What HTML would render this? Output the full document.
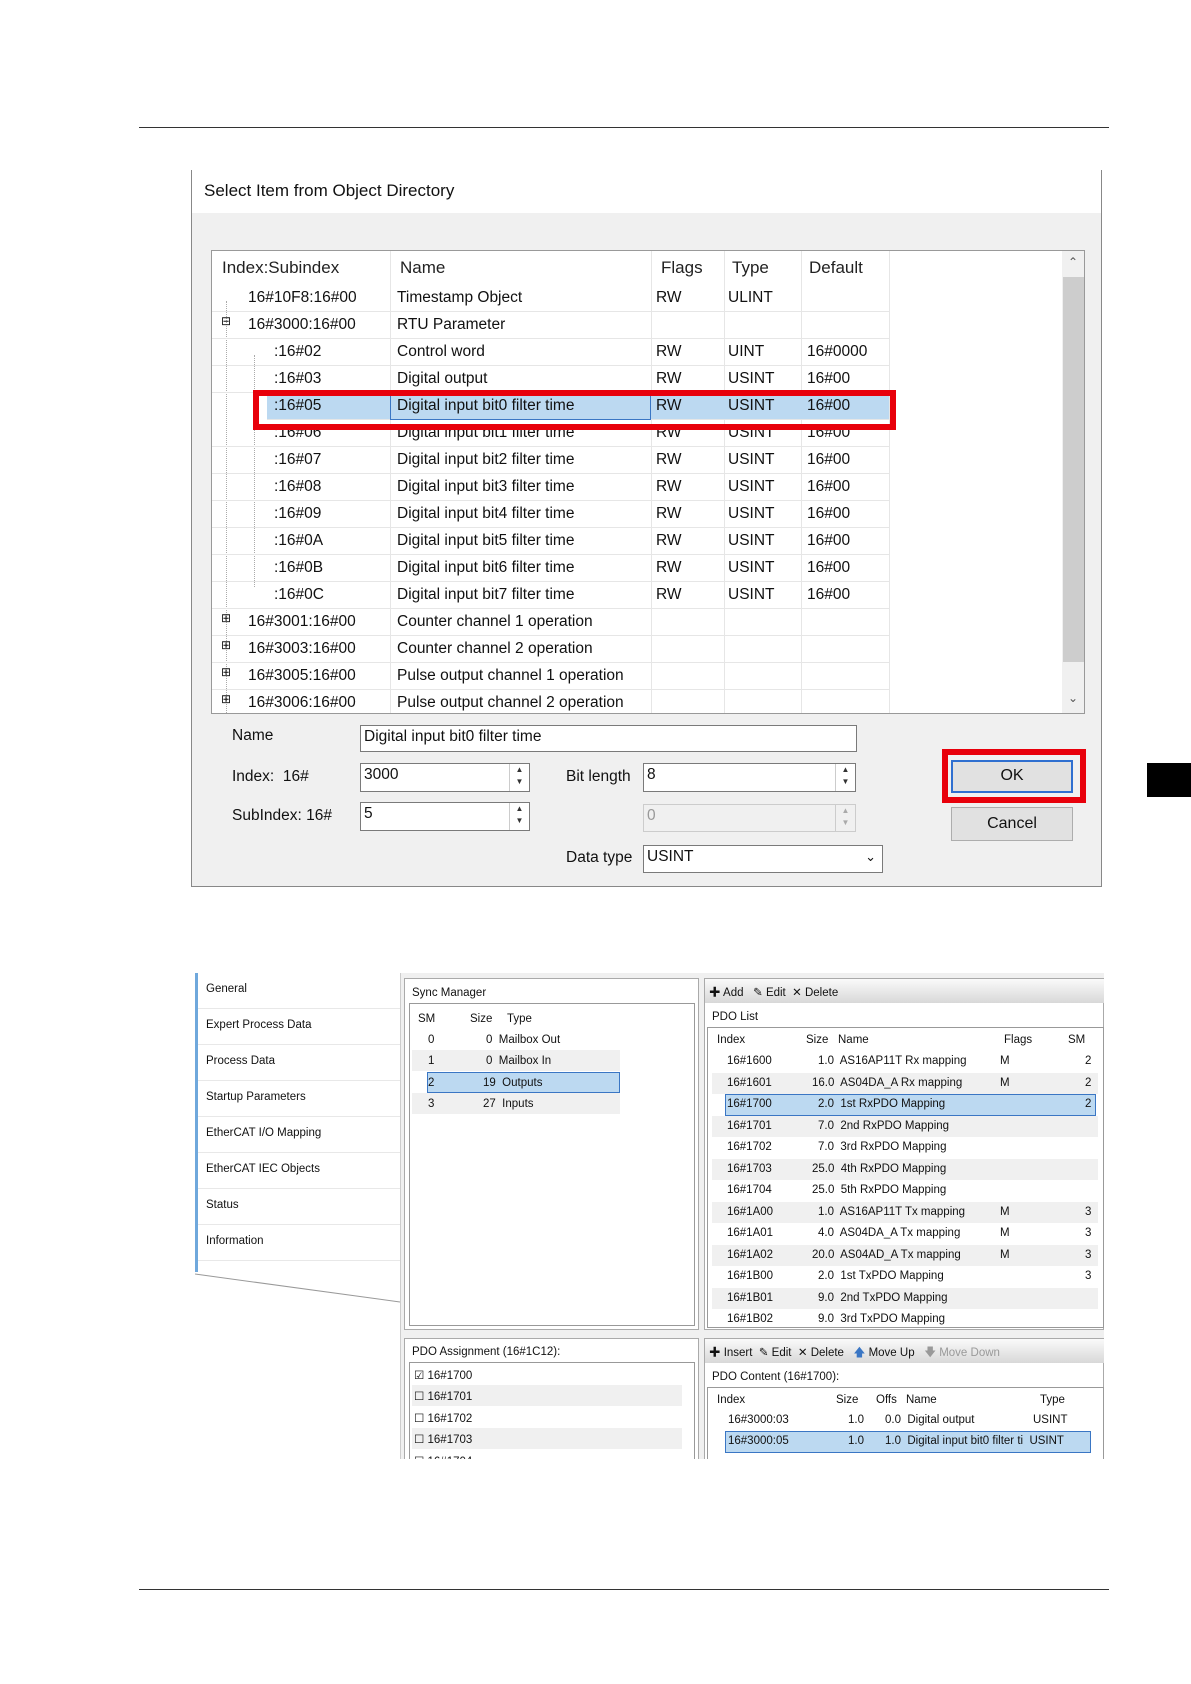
<!DOCTYPE html>
<html><head><meta charset="utf-8"><style>
*{margin:0;padding:0;box-sizing:border-box}
body{width:1191px;height:1684px;background:#fff;position:relative;overflow:hidden;font-family:"Liberation Sans","Noto Sans CJK TC",sans-serif;color:#111}
.a{position:absolute;white-space:nowrap}
.rule{position:absolute;left:139px;width:970px;height:1px;background:#333}
.dlg{position:absolute;left:191px;top:170px;width:911px;height:717px;border:1px solid #888;border-top:none;background:#f0f0f0}
.tb{position:absolute;left:0;top:0;width:100%;height:43px;background:#fff}
.list{position:absolute;left:19px;top:80px;width:874px;height:464px;background:#fff;border:1px solid #999;overflow:hidden;font-size:15.5px}
.row{position:absolute;left:0;width:677px;height:27px;border-bottom:1px solid #e6e6e6}
.c{position:absolute;top:4px}
.vl{position:absolute;top:0;width:1px;background:#e6e6e6;height:464px}
.inp{position:absolute;background:#fff;border:1px solid #7a7a7a;font-size:15.5px;padding:2px 3px}
.spin{position:absolute;right:0;top:0;width:20px;height:100%;border-left:1px solid #ccc;font-size:8px;text-align:center;line-height:12px;color:#333}
.btn{position:absolute;background:#e1e1e1;border:1px solid #adadad;font-size:16px;text-align:center}
.lbl{position:absolute;font-size:15.5px;white-space:nowrap}
.low{position:absolute;left:195px;top:973px;width:909px;height:486px;overflow:hidden}
.tab{position:absolute;left:3px;width:202px;height:36px;font-size:11.5px;padding:10px 0 0 8px;border-bottom:1px solid #e8e8e8}
.pl{position:absolute;font-size:11.5px;white-space:nowrap}
</style></head><body>
<div class="rule" style="top:127px"></div>
<div class="rule" style="top:1589px"></div>
<div class="a" style="left:1147px;top:763px;width:44px;height:34px;background:#000"></div>

<div class="dlg">
 <div class="tb"></div>
 <div class="lbl" style="left:12px;top:11px;font-size:17px">Select Item from Object Directory</div>
 <div class="list">
  <div class="vl" style="left:178px"></div><div class="vl" style="left:439px"></div><div class="vl" style="left:512px"></div><div class="vl" style="left:589px"></div><div class="vl" style="left:677px"></div>
  <div class="a" style="left:0;top:0;width:692px;height:34px;font-size:17px;color:#222">
   <span class="a" style="left:10px;top:7px">Index:Subindex</span><span class="a" style="left:188px;top:7px">Name</span><span class="a" style="left:449px;top:7px">Flags</span><span class="a" style="left:520px;top:7px">Type</span><span class="a" style="left:597px;top:7px">Default</span>
  </div>
  <div class="a" style="left:850px;top:0;width:23px;height:462px;background:#f0f0f0"></div>
  <div class="a" style="left:851px;top:26px;width:21px;height:385px;background:#cdcdcd"></div>
  <div class="a" style="left:856px;top:4px;font-size:12px;color:#555">&#8963;</div>
  <div class="a" style="left:856px;top:440px;font-size:12px;color:#555">&#8964;</div>
  <div class="a" style="left:14px;top:50px;width:1px;height:414px;border-left:1px dotted #aaa"></div>
  <div class="a" style="left:42px;top:104px;width:1px;height:232px;border-left:1px dotted #aaa"></div>
  <div class="row" style="top:34px"><span class="c" style="left:36px">16#10F8:16#00</span><span class="c" style="left:185px">Timestamp Object</span><span class="c" style="left:444px">RW</span><span class="c" style="left:516px">ULINT</span></div>
  <div class="row" style="top:61px"><span class="c" style="left:9px;top:2px;font-size:12px">&#8863;</span><span class="c" style="left:36px">16#3000:16#00</span><span class="c" style="left:185px">RTU Parameter</span></div>
  <div class="row" style="top:88px"><span class="c" style="left:62px">:16#02</span><span class="c" style="left:185px">Control word</span><span class="c" style="left:444px">RW</span><span class="c" style="left:516px">UINT</span><span class="c" style="left:595px">16#0000</span></div>
  <div class="row" style="top:115px"><span class="c" style="left:62px">:16#03</span><span class="c" style="left:185px">Digital output</span><span class="c" style="left:444px">RW</span><span class="c" style="left:516px">USINT</span><span class="c" style="left:595px">16#00</span></div>
  <div class="row" style="top:142px;left:55px;width:622px;background:#bcd9f1"></div>
  <div class="a" style="left:178px;top:142px;width:261px;height:27px;border:1px solid #3a76c4"></div>
  <div class="row" style="top:142px;border:none"><span class="c" style="left:62px">:16#05</span><span class="c" style="left:185px">Digital input bit0 filter time</span><span class="c" style="left:444px">RW</span><span class="c" style="left:516px">USINT</span><span class="c" style="left:595px">16#00</span></div>
  <div class="row" style="top:169px"><span class="c" style="left:62px">:16#06</span><span class="c" style="left:185px">Digital input bit1 filter time</span><span class="c" style="left:444px">RW</span><span class="c" style="left:516px">USINT</span><span class="c" style="left:595px">16#00</span></div>
  <div class="row" style="top:196px"><span class="c" style="left:62px">:16#07</span><span class="c" style="left:185px">Digital input bit2 filter time</span><span class="c" style="left:444px">RW</span><span class="c" style="left:516px">USINT</span><span class="c" style="left:595px">16#00</span></div>
  <div class="row" style="top:223px"><span class="c" style="left:62px">:16#08</span><span class="c" style="left:185px">Digital input bit3 filter time</span><span class="c" style="left:444px">RW</span><span class="c" style="left:516px">USINT</span><span class="c" style="left:595px">16#00</span></div>
  <div class="row" style="top:250px"><span class="c" style="left:62px">:16#09</span><span class="c" style="left:185px">Digital input bit4 filter time</span><span class="c" style="left:444px">RW</span><span class="c" style="left:516px">USINT</span><span class="c" style="left:595px">16#00</span></div>
  <div class="row" style="top:277px"><span class="c" style="left:62px">:16#0A</span><span class="c" style="left:185px">Digital input bit5 filter time</span><span class="c" style="left:444px">RW</span><span class="c" style="left:516px">USINT</span><span class="c" style="left:595px">16#00</span></div>
  <div class="row" style="top:304px"><span class="c" style="left:62px">:16#0B</span><span class="c" style="left:185px">Digital input bit6 filter time</span><span class="c" style="left:444px">RW</span><span class="c" style="left:516px">USINT</span><span class="c" style="left:595px">16#00</span></div>
  <div class="row" style="top:331px"><span class="c" style="left:62px">:16#0C</span><span class="c" style="left:185px">Digital input bit7 filter time</span><span class="c" style="left:444px">RW</span><span class="c" style="left:516px">USINT</span><span class="c" style="left:595px">16#00</span></div>
  <div class="row" style="top:358px"><span class="c" style="left:9px;top:2px;font-size:12px">&#8862;</span><span class="c" style="left:36px">16#3001:16#00</span><span class="c" style="left:185px">Counter channel 1 operation</span></div>
  <div class="row" style="top:385px"><span class="c" style="left:9px;top:2px;font-size:12px">&#8862;</span><span class="c" style="left:36px">16#3003:16#00</span><span class="c" style="left:185px">Counter channel 2 operation</span></div>
  <div class="row" style="top:412px"><span class="c" style="left:9px;top:2px;font-size:12px">&#8862;</span><span class="c" style="left:36px">16#3005:16#00</span><span class="c" style="left:185px">Pulse output channel 1 operation</span></div>
  <div class="row" style="top:439px"><span class="c" style="left:9px;top:2px;font-size:12px">&#8862;</span><span class="c" style="left:36px">16#3006:16#00</span><span class="c" style="left:185px">Pulse output channel 2 operation</span></div>
 </div>
 <div class="a" style="left:61px;top:220px;width:643px;height:40px;border:6px solid #e8000b"></div>

 <div class="lbl" style="left:40px;top:557px">Name</div>
 <div class="inp" style="left:168px;top:555px;width:497px;height:27px">Digital input bit0 filter time</div>
 <div class="lbl" style="left:40px;top:598px">Index:&nbsp; 16#</div>
 <div class="inp" style="left:168px;top:593px;width:170px;height:29px">3000<div class="spin">&#9650;<br>&#9660;</div></div>
 <div class="lbl" style="left:40px;top:637px">SubIndex: 16#</div>
 <div class="inp" style="left:168px;top:632px;width:170px;height:29px">5<div class="spin">&#9650;<br>&#9660;</div></div>
 <div class="lbl" style="left:374px;top:598px">Bit length</div>
 <div class="inp" style="left:451px;top:593px;width:213px;height:29px">8<div class="spin">&#9650;<br>&#9660;</div></div>
 <div class="inp" style="left:451px;top:634px;width:213px;height:28px;background:#f0f0f0;border-color:#ccc;color:#999">0<div class="spin" style="color:#aaa">&#9650;<br>&#9660;</div></div>
 <div class="lbl" style="left:374px;top:679px">Data type</div>
 <div class="inp" style="left:451px;top:675px;width:240px;height:28px">USINT<span class="a" style="right:6px;top:3px;font-size:13px">&#8964;</span></div>
 <div class="a" style="left:750px;top:579px;width:144px;height:54px;border:6px solid #e8000b"></div>
 <div class="btn" style="left:759px;top:590px;width:122px;height:33px;border:2px solid #2f6fd0;padding-top:5px">OK</div>
 <div class="btn" style="left:759px;top:637px;width:122px;height:34px;padding-top:7px">Cancel</div>
</div>

<div class="low">
 <div class="a" style="left:0;top:0;width:205px;height:300px;background:#fff;border-left:3px solid #6fa8dc"></div>
 <svg class="a" style="left:0;top:299px" width="210" height="40"><polygon points="0,0 205,0 205,30 0,2" fill="#fff"/><polyline points="0,2 205,30" stroke="#999" fill="none"/></svg>
 <div class="tab" style="top:0">General</div>
 <div class="tab" style="top:36px">Expert Process Data</div>
 <div class="tab" style="top:72px">Process Data</div>
 <div class="tab" style="top:108px">Startup Parameters</div>
 <div class="tab" style="top:144px">EtherCAT I/O Mapping</div>
 <div class="tab" style="top:180px">EtherCAT IEC Objects</div>
 <div class="tab" style="top:216px">Status</div>
 <div class="tab" style="top:252px">Information</div>
 <div class="a" style="left:205px;top:0;width:704px;height:486px;background:#f0f0f0;border-left:1px solid #ccc"></div>

 <div class="a" style="left:209px;top:5px;width:295px;height:352px;background:#fff;border:1px solid #aaa"></div>
 <div class="pl" style="left:217px;top:14px">Sync Manager</div>
 <div class="a" style="left:214px;top:30px;width:286px;height:323px;border:1px solid #999"></div>
 <div class="pl" style="left:223px;top:40px">SM</div><div class="pl" style="left:275px;top:40px">Size</div><div class="pl" style="left:312px;top:40px">Type</div>
 <div class="a" style="left:217px;top:77px;width:208px;height:21px;background:#f0f0f0"></div>
 <div class="a" style="left:217px;top:120px;width:208px;height:21px;background:#f0f0f0"></div>
 <div class="a" style="left:232px;top:99px;width:193px;height:21px;background:#bcd9f1;border:1px solid #3a76c4"></div>
 <div class="pl" style="left:233px;top:61px">0</div><div class="pl" style="left:291px;top:61px">0&nbsp; Mailbox Out</div>
 <div class="pl" style="left:233px;top:82px">1</div><div class="pl" style="left:291px;top:82px">0&nbsp; Mailbox In</div>
 <div class="pl" style="left:233px;top:104px">2</div><div class="pl" style="left:288px;top:104px">19&nbsp; Outputs</div>
 <div class="pl" style="left:233px;top:125px">3</div><div class="pl" style="left:288px;top:125px">27&nbsp; Inputs</div>

 <div class="a" style="left:509px;top:5px;width:400px;height:352px;background:#fff;border:1px solid #aaa"></div>
 <div class="a" style="left:510px;top:6px;width:399px;height:24px;background:linear-gradient(#fafafa,#d8d8d8)"></div>
 <div class="pl" style="left:514px;top:11px">&#10010; Add&nbsp;&nbsp; &#9998; Edit&nbsp; &#10005; Delete</div>
 <div class="pl" style="left:517px;top:38px">PDO List</div>
 <div class="a" style="left:512px;top:54px;width:397px;height:301px;border:1px solid #999"></div>
 <div class="pl" style="left:522px;top:61px">Index</div><div class="pl" style="left:611px;top:61px">Size</div><div class="pl" style="left:643px;top:61px">Name</div><div class="pl" style="left:809px;top:61px">Flags</div><div class="pl" style="left:873px;top:61px">SM</div>

 <div class="a" style="left:209px;top:365px;width:295px;height:130px;background:#fff;border:1px solid #aaa"></div>
 <div class="pl" style="left:217px;top:373px">PDO Assignment (16#1C12):</div>
 <div class="a" style="left:214px;top:389px;width:286px;height:100px;border:1px solid #999"></div>
 <div class="a" style="left:217px;top:412px;width:270px;height:21px;background:#f0f0f0"></div>
 <div class="a" style="left:217px;top:455px;width:270px;height:21px;background:#f0f0f0"></div>
 <div class="pl" style="left:219px;top:395px">&#9745; 16#1700</div>
 <div class="pl" style="left:219px;top:416px">&#9744; 16#1701</div>
 <div class="pl" style="left:219px;top:438px">&#9744; 16#1702</div>
 <div class="pl" style="left:219px;top:459px">&#9744; 16#1703</div>
 <div class="pl" style="left:219px;top:481px">&#9744; 16#1704</div>

 <div class="a" style="left:509px;top:365px;width:400px;height:130px;background:#fff;border:1px solid #aaa"></div>
 <div class="a" style="left:510px;top:366px;width:399px;height:24px;background:linear-gradient(#fafafa,#d8d8d8)"></div>
 <div class="pl" style="left:514px;top:371px">&#10010; Insert&nbsp; &#9998; Edit&nbsp; &#10005; Delete&nbsp;&nbsp; <span style="color:#3a76c4">&#129093;</span> Move Up&nbsp;&nbsp; <span style="color:#999">&#129095; Move Down</span></div>
 <div class="pl" style="left:517px;top:398px">PDO Content (16#1700):</div>
 <div class="a" style="left:512px;top:414px;width:397px;height:80px;border:1px solid #999"></div>
 <div class="pl" style="left:522px;top:421px">Index</div><div class="pl" style="left:641px;top:421px">Size</div><div class="pl" style="left:681px;top:421px">Offs</div><div class="pl" style="left:711px;top:421px">Name</div><div class="pl" style="left:845px;top:421px">Type</div>
 <div class="a" style="left:530px;top:458px;width:366px;height:22px;background:#bcd9f1;border:1px solid #3a76c4"></div>
 <div class="pl" style="left:533px;top:441px">16#3000:03</div><div class="pl" style="left:653px;top:441px">1.0</div><div class="pl" style="left:690px;top:441px">0.0&nbsp; Digital output</div><div class="pl" style="left:838px;top:441px">USINT</div>
 <div class="pl" style="left:533px;top:462px">16#3000:05</div><div class="pl" style="left:653px;top:462px">1.0</div><div class="pl" style="left:690px;top:462px">1.0&nbsp; Digital input bit0 filter ti&nbsp; USINT</div>
</div>
<div style="position:absolute;left:707px;top:1027px;width:397px;height:300px;overflow:hidden">
 <div class="a" style="left:5px;top:46px;width:386px;height:21px;background:#f0f0f0"></div>
 <div class="a" style="left:5px;top:89px;width:386px;height:21px;background:#f0f0f0"></div>
 <div class="a" style="left:5px;top:132px;width:386px;height:21px;background:#f0f0f0"></div>
 <div class="a" style="left:5px;top:175px;width:386px;height:21px;background:#f0f0f0"></div>
 <div class="a" style="left:5px;top:218px;width:386px;height:21px;background:#f0f0f0"></div>
 <div class="a" style="left:5px;top:261px;width:386px;height:21px;background:#f0f0f0"></div>
 <div class="a" style="left:18px;top:67px;width:371px;height:22px;background:#bcd9f1;border:1px solid #3a76c4"></div>
 <div class="pl" style="left:20px;top:28px">16#1600</div><div class="pl" style="left:111px;top:28px">1.0&nbsp; AS16AP11T Rx mapping</div><div class="pl" style="left:293px;top:28px">M</div><div class="pl" style="left:378px;top:28px">2</div>
 <div class="pl" style="left:20px;top:50px">16#1601</div><div class="pl" style="left:105px;top:50px">16.0&nbsp; AS04DA_A Rx mapping</div><div class="pl" style="left:293px;top:50px">M</div><div class="pl" style="left:378px;top:50px">2</div>
 <div class="pl" style="left:20px;top:71px">16#1700</div><div class="pl" style="left:111px;top:71px">2.0&nbsp; 1st RxPDO Mapping</div><div class="pl" style="left:378px;top:71px">2</div>
 <div class="pl" style="left:20px;top:93px">16#1701</div><div class="pl" style="left:111px;top:93px">7.0&nbsp; 2nd RxPDO Mapping</div>
 <div class="pl" style="left:20px;top:114px">16#1702</div><div class="pl" style="left:111px;top:114px">7.0&nbsp; 3rd RxPDO Mapping</div>
 <div class="pl" style="left:20px;top:136px">16#1703</div><div class="pl" style="left:105px;top:136px">25.0&nbsp; 4th RxPDO Mapping</div>
 <div class="pl" style="left:20px;top:157px">16#1704</div><div class="pl" style="left:105px;top:157px">25.0&nbsp; 5th RxPDO Mapping</div>
 <div class="pl" style="left:20px;top:179px">16#1A00</div><div class="pl" style="left:111px;top:179px">1.0&nbsp; AS16AP11T Tx mapping</div><div class="pl" style="left:293px;top:179px">M</div><div class="pl" style="left:378px;top:179px">3</div>
 <div class="pl" style="left:20px;top:200px">16#1A01</div><div class="pl" style="left:111px;top:200px">4.0&nbsp; AS04DA_A Tx mapping</div><div class="pl" style="left:293px;top:200px">M</div><div class="pl" style="left:378px;top:200px">3</div>
 <div class="pl" style="left:20px;top:222px">16#1A02</div><div class="pl" style="left:105px;top:222px">20.0&nbsp; AS04AD_A Tx mapping</div><div class="pl" style="left:293px;top:222px">M</div><div class="pl" style="left:378px;top:222px">3</div>
 <div class="pl" style="left:20px;top:243px">16#1B00</div><div class="pl" style="left:111px;top:243px">2.0&nbsp; 1st TxPDO Mapping</div><div class="pl" style="left:378px;top:243px">3</div>
 <div class="pl" style="left:20px;top:265px">16#1B01</div><div class="pl" style="left:111px;top:265px">9.0&nbsp; 2nd TxPDO Mapping</div>
 <div class="pl" style="left:20px;top:286px">16#1B02</div><div class="pl" style="left:111px;top:286px">9.0&nbsp; 3rd TxPDO Mapping</div>
</div>
</body></html>
